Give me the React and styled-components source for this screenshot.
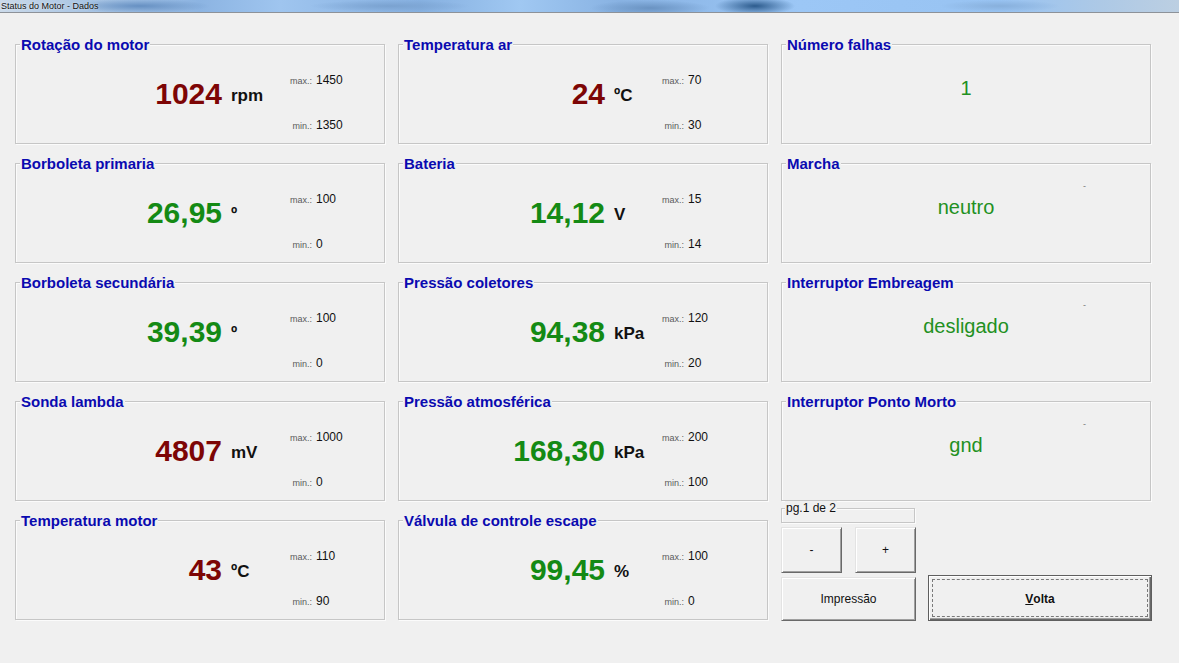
import React from 'react';
import styled, { createGlobalStyle } from 'styled-components';

const GlobalStyle = createGlobalStyle`
    html, body {
        margin: 0;
        padding: 0;
        background: #f0f0f0;
    }
    body {
        font-family: "Liberation Sans", Arial, sans-serif;
        width: 1179px;
        height: 663px;
        overflow: hidden;
    }
`;

const Window = styled.div`
    width: 1179px;
    height: 663px;
    background: #f0f0f0;
`;

const TitleBar = styled.div`
    height: 12px;
    border-bottom: 1px solid #8d9299;
    background:
        radial-gradient(ellipse 40px 9px at 755px 6px, #2c5b8d 0%, rgba(44,91,141,0) 100%),
        radial-gradient(ellipse 60px 8px at 650px 8px, #6a93c2 0%, rgba(106,147,194,0) 100%),
        radial-gradient(ellipse 70px 7px at 140px 6px, #6690c2 0%, rgba(102,144,194,0) 100%),
        radial-gradient(ellipse 80px 6px at 390px 6px, #7aa2d0 0%, rgba(122,162,208,0) 100%),
        radial-gradient(ellipse 60px 6px at 1000px 6px, #88b0dc 0%, rgba(136,176,220,0) 100%),
        linear-gradient(to right, #cbdaea 0px, #abc6e4 80px, #8cb4e2 200px, #9fc5ef 280px, #86b0e0 420px, #a0c8f2 520px, #88b2e2 620px, #9cc7f6 800px, #98c3f2 1000px, #adc9e6 1100px, #bccfe2 1179px);
    display: flex;
    align-items: center;
    padding-left: 1px;
`;

const TitleText = styled.span`
    font-size: 9px;
    line-height: 12px;
    color: #111;
    text-shadow: 0 0 2px rgba(255,255,255,0.8);
`;

const Board = styled.div`
    display: grid;
    grid-template-columns: repeat(3, 370px);
    grid-auto-rows: 100px;
    column-gap: 13px;
    row-gap: 19px;
    padding: 31px 0 0 15px;
`;

const Panel = styled.div`
    position: relative;
    box-sizing: border-box;
    border: 1px solid #c6c6c6;
    box-shadow: inset 1px 1px 0 #fbfbfb, 1px 1px 0 #fbfbfb;
    display: grid;
    grid-template-columns: 206px 1fr;
`;

const Caption = styled.span`
    position: absolute;
    top: -9px;
    left: 4px;
    padding: 0 1px;
    background: #f0f0f0;
    font-size: 15px;
    line-height: 17px;
    font-weight: bold;
    color: #0a0ab0;
    white-space: nowrap;
`;

const Value = styled.div`
    padding-top: 34px;
    text-align: right;
    font-size: 30px;
    line-height: 30px;
    font-weight: bold;
    color: ${p => (p.$alert ? '#7d0505' : '#148a14')};
`;

const Side = styled.div`
    display: flex;
`;

const Unit = styled.div`
    padding-top: 42px;
    margin-left: 9px;
    font-size: 17px;
    line-height: 17px;
    font-weight: bold;
    color: #111;
    width: ${p => p.$limitsAt - 215 - 44}px;
    flex: none;
`;

const Limits = styled.div`
    display: grid;
    grid-template-columns: 40px auto;
    grid-template-rows: 14px 14px;
    row-gap: 31px;
    column-gap: 4px;
    padding-top: 28px;
    align-items: baseline;
`;

const LimitLabel = styled.span`
    text-align: right;
    font-size: 9px;
    line-height: 14px;
    color: #5a5a5a;
`;

const LimitValue = styled.span`
    font-size: 12px;
    line-height: 14px;
    color: #111;
`;

const StatePanel = styled(Panel)`
    grid-template-columns: 1fr;
    grid-template-rows: 1fr;
`;

const StateText = styled.div`
    grid-area: 1 / 1;
    justify-self: center;
    margin-top: 31px;
    font-size: 20px;
    line-height: 24px;
    color: #229022;
`;

const StateHint = styled.div`
    grid-area: 1 / 1;
    justify-self: start;
    margin: 17px 0 0 301px;
    font-size: 9px;
    line-height: 10px;
    color: #777;
`;

const Controls = styled.div`
    margin-top: -18px;
    display: grid;
    grid-template-columns: 135px 224px;
    column-gap: 12px;
    align-items: end;
`;

const ControlColumn = styled.div`
    display: flex;
    flex-direction: column;
`;

const PageBox = styled.div`
    position: relative;
    box-sizing: border-box;
    margin-top: 6px;
    width: 134px;
    height: 15px;
    border: 1px solid #c6c6c6;
    box-shadow: inset 1px 1px 0 #fbfbfb, 1px 1px 0 #fbfbfb;
`;

const PageLabel = styled.span`
    position: absolute;
    top: -8px;
    left: 3px;
    padding: 0 1px;
    background: #f0f0f0;
    font-size: 12px;
    line-height: 14px;
    color: #111;
`;

const StepRow = styled.div`
    display: flex;
    gap: 13px;
    margin-top: 4px;
`;

const Button = styled.button`
    box-sizing: border-box;
    width: ${p => p.$w}px;
    height: ${p => p.$h}px;
    margin: 0;
    padding: 0;
    background: #f0f0f0;
    border-style: solid;
    border-width: 1px;
    border-color: #e3e3e3 #696969 #696969 #e3e3e3;
    box-shadow: inset 1px 1px 0 #ffffff, inset -1px -1px 0 #a0a0a0;
    font-family: "Liberation Sans", Arial, sans-serif;
    font-size: 12px;
    color: #111;
`;

const PrintButton = styled(Button)`
    margin-top: 4px;
`;

const DefaultButton = styled(Button)`
    border: 1px solid #5f5f5f;
    box-shadow: inset 1px 1px 0 #ffffff, inset -1px -1px 0 #696969, inset -2px -2px 0 #a0a0a0;
    font-weight: bold;
    display: flex;
    padding: 3px;
`;

const FocusRing = styled.span`
    flex: 1;
    display: flex;
    align-items: center;
    justify-content: center;
    border: 1px dashed #7a7a7a;
    padding-top: 1px;
`;

const columns = [
    [
        { title: 'Rotação do motor', value: '1024', unit: 'rpm', max: '1450', min: '1350', alert: true },
        { title: 'Borboleta primaria', value: '26,95', unit: 'º', max: '100', min: '0' },
        { title: 'Borboleta secundária', value: '39,39', unit: 'º', max: '100', min: '0' },
        { title: 'Sonda lambda', value: '4807', unit: 'mV', max: '1000', min: '0', alert: true },
        { title: 'Temperatura motor', value: '43', unit: 'ºC', max: '110', min: '90', alert: true },
    ],
    [
        { title: 'Temperatura ar', value: '24', unit: 'ºC', max: '70', min: '30', alert: true },
        { title: 'Bateria', value: '14,12', unit: 'V', max: '15', min: '14' },
        { title: 'Pressão coletores', value: '94,38', unit: 'kPa', max: '120', min: '20' },
        { title: 'Pressão atmosférica', value: '168,30', unit: 'kPa', max: '200', min: '100' },
        { title: 'Válvula de controle escape', value: '99,45', unit: '%', max: '100', min: '0' },
    ],
];

const states = [
    { title: 'Número falhas', value: '1' },
    { title: 'Marcha', value: 'neutro', hint: '-' },
    { title: 'Interruptor Embreagem', value: 'desligado', hint: '-' },
    { title: 'Interruptor Ponto Morto', value: 'gnd', hint: '-' },
];

// where the max/min numbers start, measured from the panel edge
const limitsAt = [300, 289];

function Reading({ item, at }) {
    return (
        <Panel>
            <Caption>{item.title}</Caption>
            <Value $alert={item.alert}>{item.value}</Value>
            <Side>
                <Unit $limitsAt={at}>{item.unit}</Unit>
                <Limits>
                    <LimitLabel>max.:</LimitLabel>
                    <LimitValue>{item.max}</LimitValue>
                    <LimitLabel>min.:</LimitLabel>
                    <LimitValue>{item.min}</LimitValue>
                </Limits>
            </Side>
        </Panel>
    );
}

function StateReading({ item }) {
    return (
        <StatePanel>
            <Caption>{item.title}</Caption>
            <StateText>{item.value}</StateText>
            {item.hint && <StateHint>{item.hint}</StateHint>}
        </StatePanel>
    );
}

export default function App() {
    const cells = [];
    for (let row = 0; row < 5; row++) {
        cells.push(<Reading key={'a' + row} item={columns[0][row]} at={limitsAt[0]} />);
        cells.push(<Reading key={'b' + row} item={columns[1][row]} at={limitsAt[1]} />);
        if (row < 4) {
            cells.push(<StateReading key={'c' + row} item={states[row]} />);
        } else {
            cells.push(
                <Controls key="controls">
                    <ControlColumn>
                        <PageBox>
                            <PageLabel>pg.1 de 2</PageLabel>
                        </PageBox>
                        <StepRow>
                            <Button $w={61} $h={46}>-</Button>
                            <Button $w={61} $h={46}>+</Button>
                        </StepRow>
                        <PrintButton $w={135} $h={44}>Impressão</PrintButton>
                    </ControlColumn>
                    <DefaultButton $w={224} $h={46}>
                        <FocusRing><u>V</u>olta</FocusRing>
                    </DefaultButton>
                </Controls>
            );
        }
    }

    return (
        <Window>
            <GlobalStyle />
            <TitleBar>
                <TitleText>Status do Motor - Dados</TitleText>
            </TitleBar>
            <Board>{cells}</Board>
        </Window>
    );
}
